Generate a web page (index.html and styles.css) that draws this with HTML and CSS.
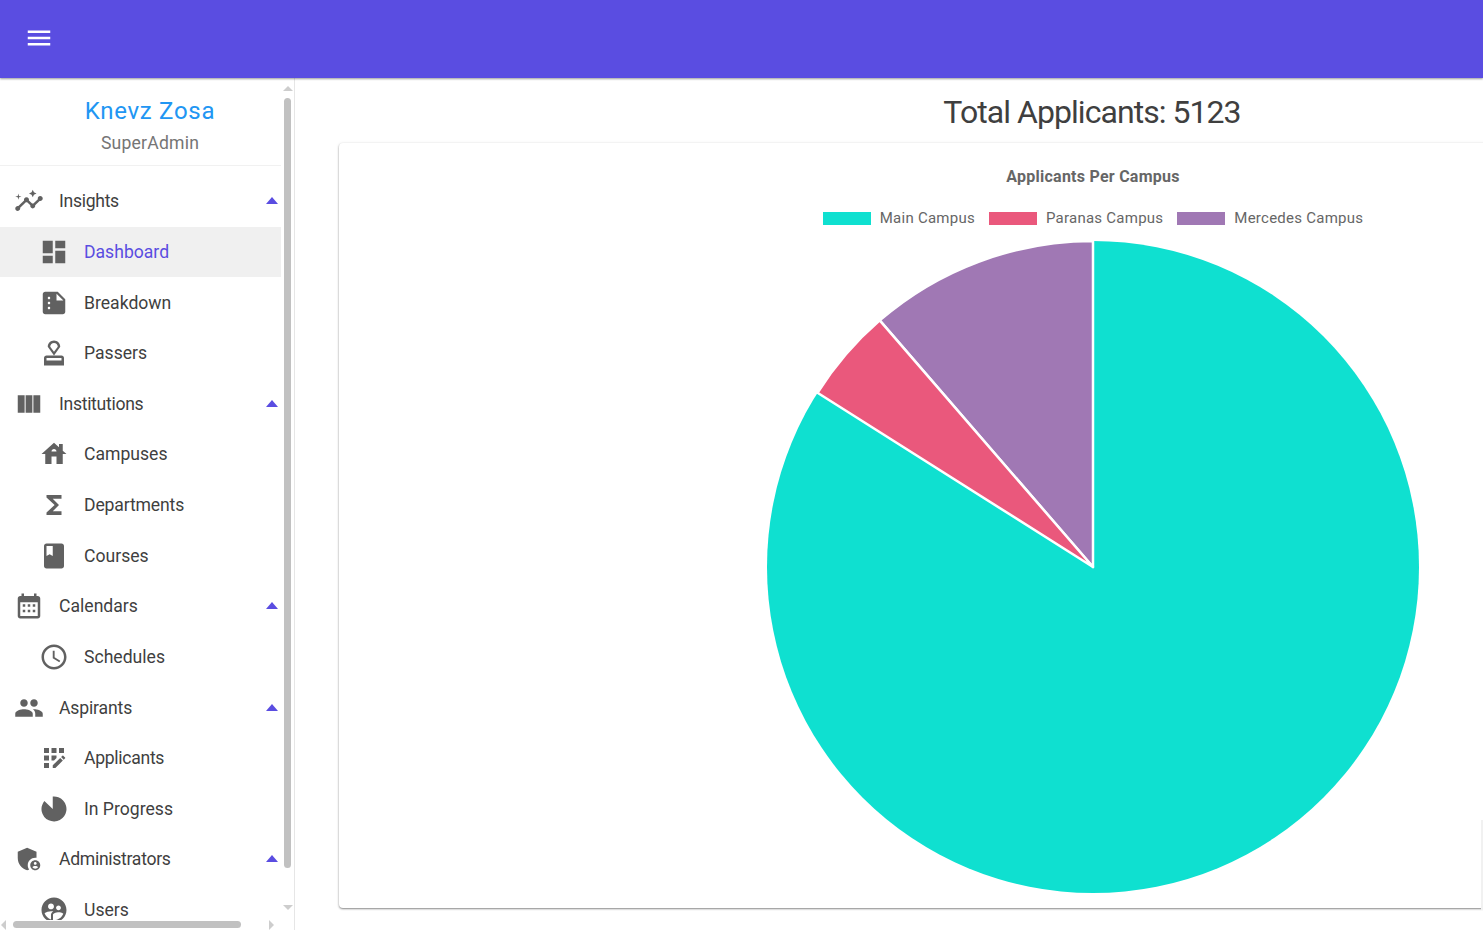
FILE: index.html
```html
<!DOCTYPE html>
<html lang="en">
<head>
<meta charset="utf-8">
<title>Dashboard</title>
<link rel="stylesheet" href="styles.css">
</head>
<body>
<header class="topbar">
  <svg class="menu-icon" viewBox="0 0 24 24"><path d="M3 18h18v-2H3v2zm0-5h18v-2H3v2zm0-7v2h18V6H3z"/></svg>
</header>
<div class="layout">
  <aside class="sidebar">
    <div class="sidebar-scroll">
      <div class="profile">
        <div class="profile-name">Knevz Zosa</div>
        <div class="profile-role">SuperAdmin</div>
      </div>
      <nav class="nav">
        <div class="row parent tight"><svg class="icon" viewBox="0 0 24 24"><path d="M21 8c-1.45 0-2.26 1.44-1.93 2.51l-3.55 3.56c-.3-.09-.74-.09-1.04 0l-2.55-2.55C12.27 10.45 11.46 9 10 9c-1.45 0-2.27 1.44-1.93 2.52l-4.56 4.55C2.44 15.74 1 16.55 1 18c0 1.1.9 2 2 2 1.45 0 2.26-1.44 1.93-2.51l4.55-4.56c.3.09.74.09 1.04 0l2.55 2.55C12.73 16.55 13.54 18 15 18c1.45 0 2.27-1.44 1.93-2.52l3.56-3.55c1.07.33 2.51-.48 2.51-1.93 0-1.1-.9-2-2-2z"/><path d="M15 9l.94-2.07L18 6l-2.06-.93L15 3l-.92 2.07L12 6l2.08.93zM3.5 11L4 9l2-.5L4 8l-.5-2L3 8l-2 .5L3 9z"/></svg><span>Insights</span><i class="caret"></i></div>
        <div class="row child active"><svg class="icon" viewBox="0 0 24 24"><path d="M3 13h8V3H3v10zm0 8h8v-6H3v6zm10 0h8V11h-8v10zm0-18v6h8V3h-8z"/></svg><span>Dashboard</span></div>
        <div class="row child"><svg class="icon" viewBox="0 0 24 24"><path d="M15 3H5c-1.1 0-1.99.9-1.99 2L3 19c0 1.1.89 2 1.99 2H19c1.1 0 2-.9 2-2V9l-6-6zM8 17c-.55 0-1-.45-1-1s.45-1 1-1 1 .45 1 1-.45 1-1 1zm0-4c-.55 0-1-.45-1-1s.45-1 1-1 1 .45 1 1-.45 1-1 1zm0-4c-.55 0-1-.45-1-1s.45-1 1-1 1 .45 1 1-.45 1-1 1zm6 1V4.5l5.5 5.5H14z"/></svg><span>Breakdown</span></div>
        <div class="row child"><svg class="icon" viewBox="0 0 24 24"><path d="M4 16v6h16v-6c0-1.1-.9-2-2-2H6c-1.1 0-2 .9-2 2zm14 2H6v-2h12v2zM12 2C9.24 2 7 4.24 7 7l5 7 5-7c0-2.76-2.24-5-5-5zm0 9L9 7c0-1.66 1.34-3 3-3s3 1.34 3 3l-3 4z"/></svg><span>Passers</span></div>
        <div class="row parent tight"><svg class="icon" viewBox="0 0 24 24"><path d="M3 5h5.5v14H3zM9.3 5h5.4v14H9.3zM15.5 5H21v14h-5.5z"/></svg><span>Institutions</span><i class="caret"></i></div>
        <div class="row child"><svg class="icon" viewBox="0 0 24 24"><path d="M19 9.3V4h-3v2.6L12 3 2 12h3v8h5v-6h4v6h5v-8h3l-3-2.7zm-9 .7c0-1.1.9-2 2-2s2 .9 2 2h-4z"/></svg><span>Campuses</span></div>
        <div class="row child snug"><svg class="icon" viewBox="0 0 24 24"><path d="M18 4H6v2l6.5 6L6 18v2h12v-3h-7l5-5-5-5h7z"/></svg><span>Departments</span></div>
        <div class="row child"><svg class="icon" viewBox="0 0 24 24"><path d="M18 2H6c-1.1 0-2 .9-2 2v16c0 1.1.9 2 2 2h12c1.1 0 2-.9 2-2V4c0-1.1-.9-2-2-2zM6 4h5v8l-2.5-1.5L6 12V4z"/></svg><span>Courses</span></div>
        <div class="row parent"><svg class="icon" viewBox="0 0 24 24"><path d="M19 4h-1V2h-2v2H8V2H6v2H5c-1.11 0-2 .9-2 2v14c0 1.1.89 2 2 2h14c1.1 0 2-.9 2-2V6c0-1.1-.9-2-2-2zm0 16H5V9h14v11zM7 10.5h2v2H7zm4 0h2v2h-2zm4 0h2v2h-2zM7 15h2v2H7zm4 0h2v2h-2zm4 0h2v2h-2z"/></svg><span>Calendars</span><i class="caret"></i></div>
        <div class="row child"><svg class="icon" viewBox="0 0 24 24"><path d="M11.99 2C6.47 2 2 6.48 2 12s4.47 10 9.99 10C17.52 22 22 17.52 22 12S17.52 2 11.99 2zM12 20c-4.42 0-8-3.58-8-8s3.58-8 8-8 8 3.58 8 8-3.58 8-8 8z"/><path d="M12.5 7H11v6l5.25 3.15.75-1.23-4.5-2.67z"/></svg><span>Schedules</span></div>
        <div class="row parent snug"><svg class="icon" viewBox="0 0 24 24"><path d="M16 11c1.66 0 2.99-1.34 2.99-3S17.66 5 16 5c-1.66 0-3 1.34-3 3s1.34 3 3 3zm-8 0c1.66 0 2.99-1.34 2.99-3S9.66 5 8 5C6.34 5 5 6.34 5 8s1.34 3 3 3zm0 2c-2.33 0-7 1.17-7 3.5V19h14v-2.5c0-2.33-4.67-3.5-7-3.5zm8 0c-.29 0-.62.02-.97.05 1.16.84 1.97 1.97 1.97 3.45V19h6v-2.5c0-2.33-4.67-3.5-7-3.5z"/></svg><span>Aspirants</span><i class="caret"></i></div>
        <div class="row child tight"><svg class="icon" viewBox="0 0 24 24"><path d="M10 4h4v4h-4zM4 16h4v4H4zM4 10h4v4H4zM4 4h4v4H4zM16 4h4v4h-4zM11 17.86V20h2.1l5.98-5.97-2.12-2.12zM14 12.03V10h-4v4h2.02zM20.85 11.56l-1.41-1.41c-.2-.2-.51-.2-.71 0l-1.06 1.06 2.12 2.12 1.06-1.06c.2-.2.2-.51 0-.71z"/></svg><span>Applicants</span></div>
        <div class="row child"><svg class="icon" viewBox="0 0 24 24"><path d="M11 12V2.05A10 10 0 1 1 4.3 5.6z"/></svg><span>In Progress</span></div>
        <div class="row parent tight"><svg class="icon" viewBox="0 0 24 24"><path d="M17 11c.34 0 .67.04 1 .09V6.27L10.5 3 3 6.27v4.91c0 4.54 3.2 8.79 7.5 9.82.55-.13 1.08-.32 1.6-.55-.69-.98-1.1-2.17-1.1-3.45 0-3.31 2.69-6 6-6z"/><path d="M17 13c-2.21 0-4 1.79-4 4s1.79 4 4 4 4-1.79 4-4-1.79-4-4-4zm0 1.38c.62 0 1.12.51 1.12 1.12s-.51 1.12-1.12 1.12-1.12-.51-1.12-1.12.5-1.12 1.12-1.12zm0 5.37c-.93 0-1.74-.46-2.24-1.17.05-.72 1.51-1.08 2.24-1.08s2.19.36 2.24 1.08c-.5.71-1.31 1.17-2.24 1.17z"/></svg><span>Administrators</span><i class="caret"></i></div>
        <div class="row child"><svg class="icon" viewBox="0 0 24 24"><path d="M11.99 2c-5.52 0-10 4.48-10 10s4.48 10 10 10 10-4.48 10-10-4.48-10-10-10zm3.61 6.34c1.07 0 1.93.86 1.93 1.93 0 1.07-.86 1.93-1.93 1.93-1.07 0-1.93-.86-1.93-1.93-.01-1.07.86-1.93 1.93-1.93zm-6-1.58c1.3 0 2.36 1.06 2.36 2.36 0 1.3-1.06 2.36-2.36 2.36s-2.36-1.06-2.36-2.36c0-1.31 1.05-2.36 2.36-2.36zm0 9.13v3.75c-2.4-.75-4.3-2.6-5.14-4.96 1.05-1.12 3.67-1.69 5.14-1.69.53 0 1.2.08 1.9.22-1.64.87-1.9 2.02-1.9 2.68zM11.99 20c-.27 0-.53-.01-.79-.04v-4.07c0-1.42 2.94-2.13 4.4-2.13 1.07 0 2.92.39 3.84 1.15-1.17 2.97-4.06 5.09-7.45 5.09z"/></svg><span>Users</span></div>
      </nav>
    </div>
    <div class="vbar"><i class="arrow up"></i><div class="vthumb"></div><i class="arrow down"></i></div>
    <div class="hbar"><i class="arrow left"></i><div class="hthumb"></div><i class="arrow right"></i></div>
  </aside>
  <main class="main">
    <h1 class="total">Total Applicants: 5123</h1>
    <section class="card">
      <div class="chart-title">Applicants Per Campus</div>
      <div class="legend">
        <div class="legend-item"><i class="swatch teal"></i>Main Campus</div>
        <div class="legend-item"><i class="swatch pink"></i>Paranas Campus</div>
        <div class="legend-item"><i class="swatch purple"></i>Mercedes Campus</div>
      </div>
      <svg class="pie" viewBox="0 0 656 656">
        <circle class="slice-teal" cx="328" cy="328" r="326"/>
        <path class="slice-purple" d="M328 328V2A326 326 0 0 0 114.7 81.4Z"/>
        <path class="slice-pink" d="M328 328L114.7 81.4A326 326 0 0 0 52.5 153.8Z"/>
      </svg>
    </section>
    <div class="edge-shadow"></div>
  </main>
</div>
</body>
</html>
```

FILE: styles.css
```css
* { box-sizing: border-box; }
html, body { margin: 0; height: 100%; overflow: hidden; }
body { font-family: Roboto, "Liberation Sans", sans-serif; background: #fff; color: #3f3f3f; }

.topbar {
  height: 78px;
  background: #5a4de1;
  display: flex;
  align-items: center;
  padding: 0 0 2px 24px;
  box-shadow: 0 1px 2px rgba(0, 0, 0, .4);
  position: relative;
  z-index: 2;
}
.menu-icon { width: 30px; height: 30px; fill: #fff; }

.layout { display: flex; height: 852px; }

.sidebar {
  width: 295px;
  flex: none;
  position: relative;
  border-right: 1px solid #e6e6e6;
  overflow: hidden;
}
.sidebar-scroll { width: 281px; height: 100%; overflow: hidden; }

.profile {
  height: 88px;
  border-bottom: 1px solid #f1f1f1;
  padding-top: 17px;
  width: 281px;
}
.profile-name { width: 300px; text-align: center; font-size: 24px; line-height: 32px; color: #2196f3; letter-spacing: .7px; }
.profile-role { width: 300px; text-align: center; font-size: 17.6px; line-height: 24px; margin-top: 4px; color: #757575; letter-spacing: .2px; }

.nav { padding-top: 10px; }
.row {
  height: 50.625px;
  display: flex;
  align-items: center;
  font-size: 17.6px;
  color: #3f3f3f;
  position: relative;
}
.row.tight { letter-spacing: -.3px; }
.row.snug { letter-spacing: -.15px; }
.row.parent { padding-left: 14px; }
.row.child { padding-left: 39px; }
.row .icon { width: 30px; height: 30px; fill: #616161; margin-right: 15px; flex: none; }
.row.active { background: #f0f0f0; color: #5a4de1; }

.caret {
  position: absolute;
  right: 3px;
  top: 50%;
  margin-top: -4px;
  border-left: 6px solid transparent;
  border-right: 6px solid transparent;
  border-bottom: 7px solid #5a4de1;
}

.vbar { position: absolute; top: 0; bottom: 0; left: 283px; width: 10px; }
.vthumb {
  position: absolute;
  top: 20px;
  left: 1px;
  width: 7px;
  height: 770px;
  border-radius: 4px;
  background: #c1c1c1;
}
.hbar { position: absolute; left: 0; right: 14px; bottom: 0; height: 10px; background: #fff; }
.hthumb {
  position: absolute;
  left: 13px;
  top: 1px;
  width: 228px;
  height: 7px;
  border-radius: 4px;
  background: #c1c1c1;
}
.arrow { position: absolute; width: 0; height: 0; border: 5px solid transparent; }
.arrow.up { top: 8px; left: 0; border-top: 0; border-bottom: 5px solid #cdcdcd; }
.arrow.down { bottom: 20px; left: 0; border-bottom: 0; border-top: 5px solid #cdcdcd; }
.arrow.left { left: 1px; top: 0; border-left: 0; border-right: 5px solid #cdcdcd; }
.arrow.right { left: 269px; top: 0; border-right: 0; border-left: 5px solid #cdcdcd; }

.main { flex: 1; min-width: 0; position: relative; overflow: hidden; padding-left: 44px; }
.total {
  margin: 0 0 0 -44px;
  height: 65px;
  padding-top: 15px;
  font-size: 32px;
  line-height: 38px;
  font-weight: 400;
  letter-spacing: -.95px;
  color: #3f3f3f;
  text-align: center;
  width: 1594px;
}
.card {
  width: 1508px;
  height: 765px;
  background: #fff;
  border-radius: 4px;
  box-shadow: 0 1px 2px rgba(0, 0, 0, .45), 0 0 4px rgba(0, 0, 0, .06);
  display: flex;
  flex-direction: column;
  align-items: center;
  padding-top: 25px;
}
.chart-title { font-size: 16px; line-height: 18px; font-weight: 700; color: #666; letter-spacing: .25px; }
.legend { display: flex; gap: 14px; margin-top: 23px; height: 18px; font-size: 15px; line-height: 18px; color: #666; letter-spacing: .25px; }
.legend-item { display: flex; align-items: center; }
.swatch { width: 48px; height: 13px; margin-right: 9px; display: block; }
.swatch.teal { background: #0fe0d0; }
.swatch.pink { background: #ea587c; }
.swatch.purple { background: #a078b4; }

.pie { width: 656px; height: 656px; margin-top: 12px; flex: none; }
.slice-teal { fill: #0fe0d0; }
.slice-pink, .slice-purple { stroke: #fff; stroke-width: 2.5; stroke-linejoin: round; }
.slice-pink { fill: #ea587c; }
.slice-purple { fill: #a078b4; }

.edge-shadow {
  position: absolute;
  right: 0;
  top: 742px;
  width: 2px;
  height: 90px;
  background: #f1f1f1;
}
```
